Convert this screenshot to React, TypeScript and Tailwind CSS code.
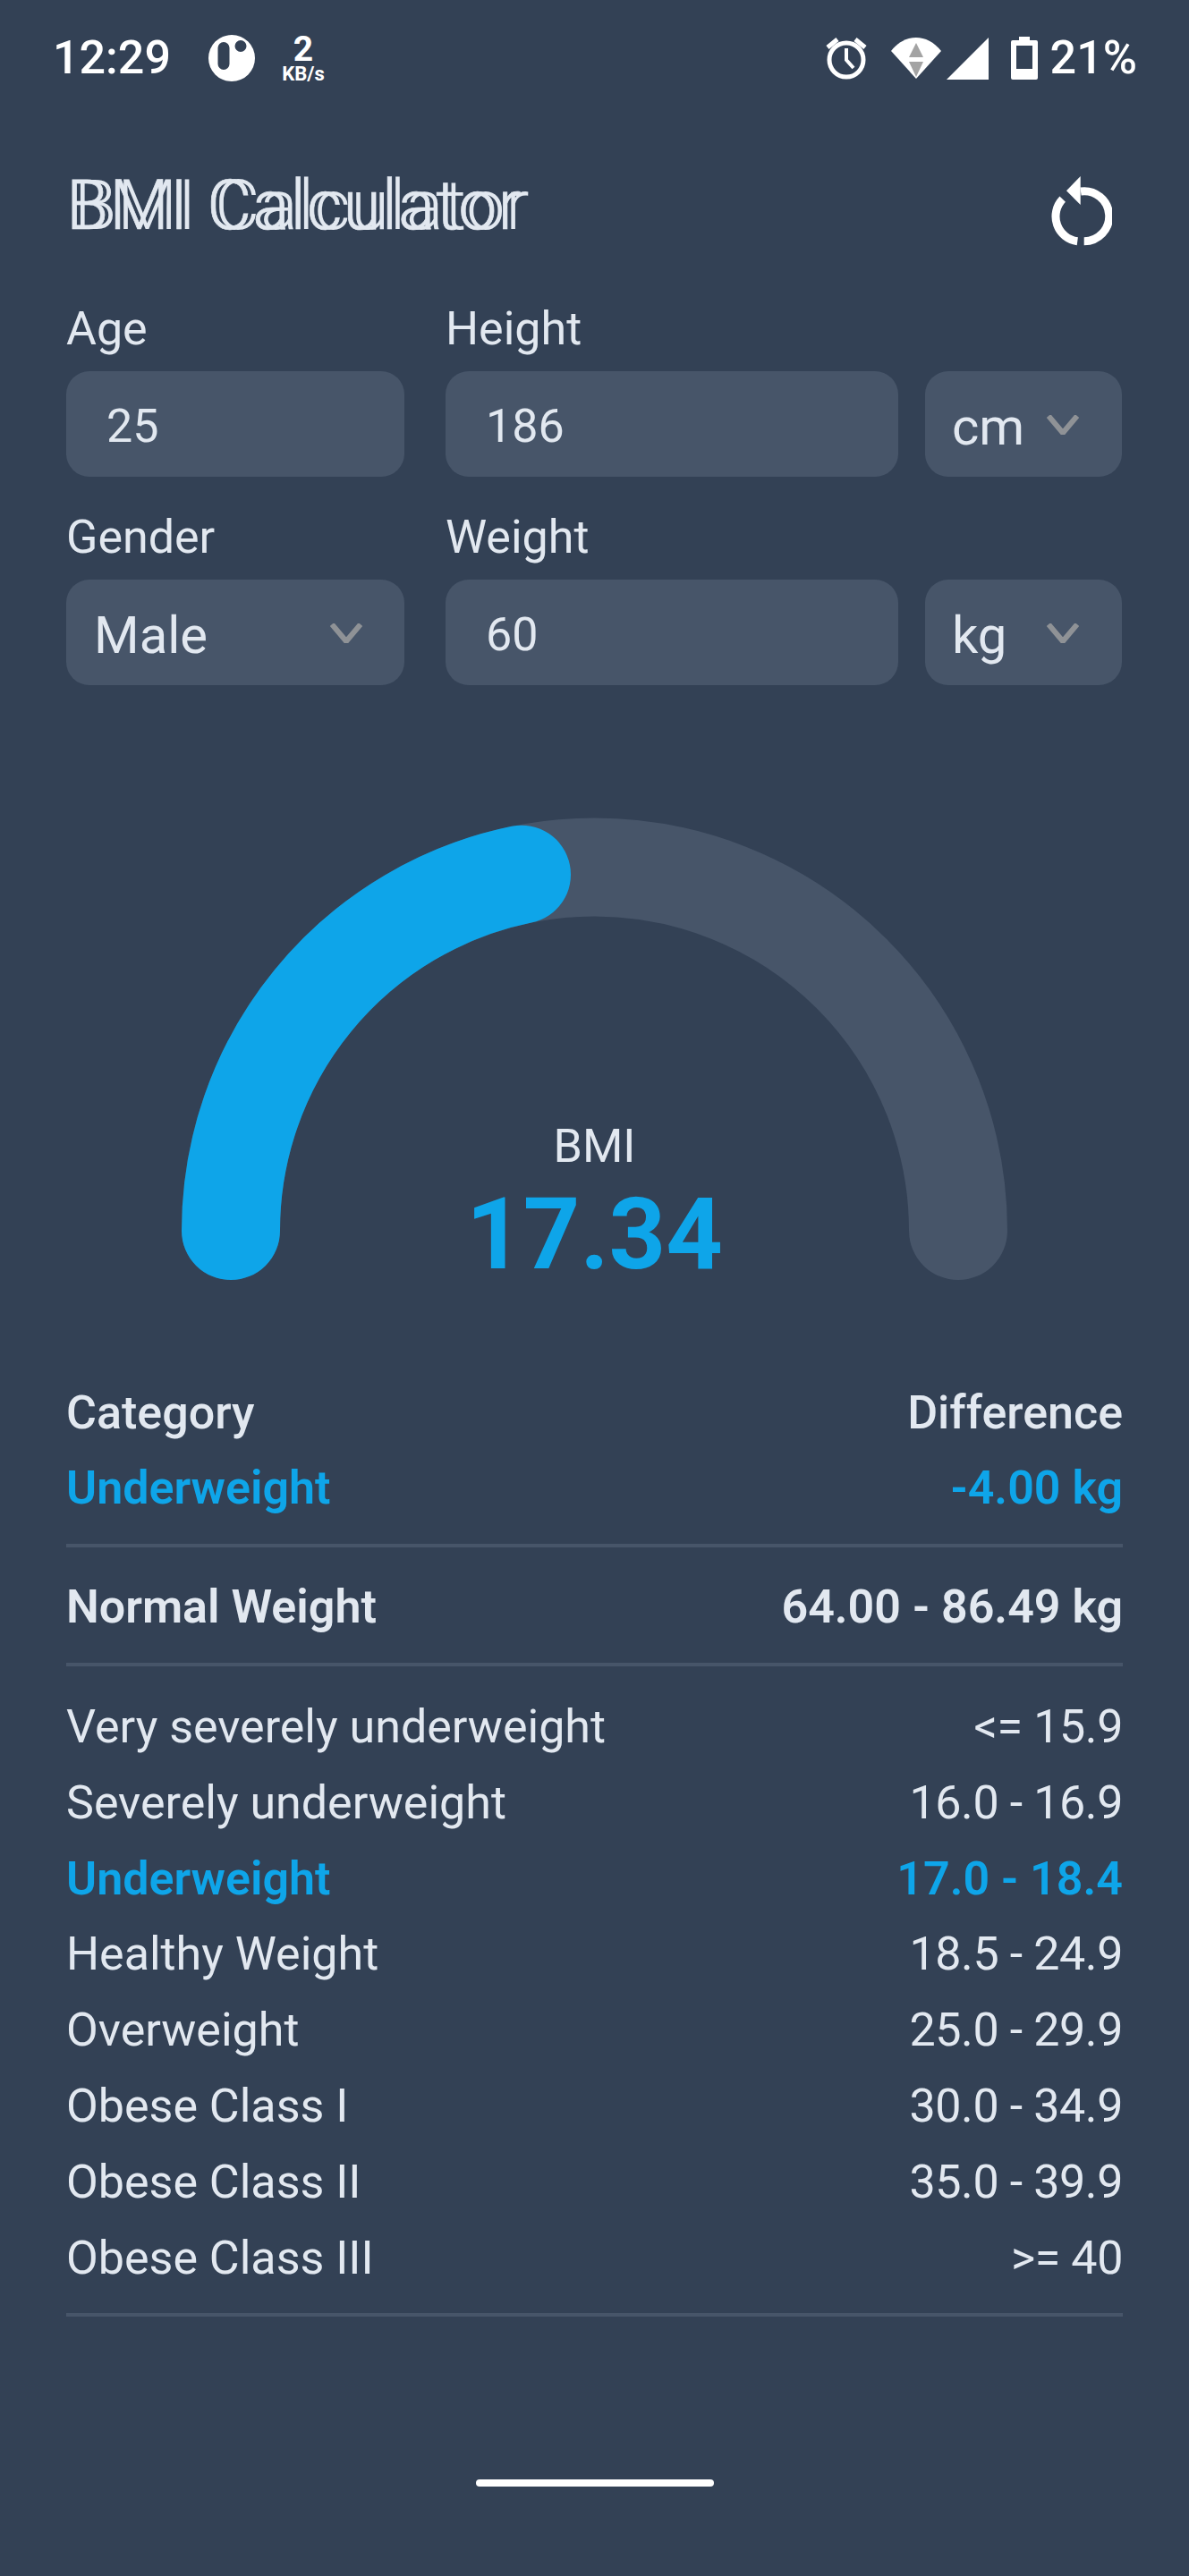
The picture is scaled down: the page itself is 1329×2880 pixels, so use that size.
const ranges = [
  { name: "Very severely underweight", value: "<= 15.9" },
  { name: "Severely underweight", value: "16.0 - 16.9" },
  { name: "Underweight", value: "17.0 - 18.4", active: true },
  { name: "Healthy Weight", value: "18.5 - 24.9" },
  { name: "Overweight", value: "25.0 - 29.9" },
  { name: "Obese Class I", value: "30.0 - 34.9" },
  { name: "Obese Class II", value: "35.0 - 39.9" },
  { name: "Obese Class III", value: ">= 40" },
];

function Chevron() {
  return (
    <svg width="36" height="22" viewBox="0 0 36 22" className="shrink-0">
      <path d="M2 1 L18 20 L34 1" fill="none" stroke="#8f9296" strokeWidth="6" />
    </svg>
  );
}

function Field({ label, value, width }: { label: string; value: string; width: string }) {
  return (
    <div className={width}>
      <div className="h-[72px] mb-[11px] leading-[72px]">{label}</div>
      <div className="h-[118px] rounded-[26px] bg-[#475569] pl-[45px] leading-[124px]">{value}</div>
    </div>
  );
}

function Select({
  label,
  value,
  width,
  padding,
  chevronX,
}: {
  label?: string;
  value: string;
  width: string;
  padding: string;
  chevronX: string;
}) {
  return (
    <div className={width}>
      <div className="h-[72px] mb-[11px] leading-[72px]">{label}</div>
      <div className={`relative h-[118px] rounded-[26px] bg-[#475569] flex items-start text-[58px] ${padding}`}>
        <span className="leading-[124px]">{value}</span>
        <span className={`absolute top-[49px] ${chevronX}`}>
          <Chevron />
        </span>
      </div>
    </div>
  );
}

function Rule({ className }: { className: string }) {
  return <div className={`h-1 bg-[#475569] ${className}`} />;
}

function StatusBar() {
  return (
    <div className="h-[130px] pl-[59px] pr-[58px] flex items-center text-white">
      <span className="text-[52px] font-medium">12:29</span>
      <svg width="52" height="52" viewBox="0 0 52 52" className="ml-[42px]">
        <path
          fillRule="evenodd"
          fill="#fff"
          d="M26 0a26 26 0 1 0 0 52a26 26 0 1 0 0-52z M17 8a6.500 6.500 0 0 0-6.500 6.500v18a6.500 6.500 0 0 0 13 0v-18a6.500 6.500 0 0 0-6.500-6.500z M36 6a6.500 6.500 0 1 0 0 13a6.500 6.500 0 1 0 0-13z"
        />
      </svg>
      <div className="ml-[26px] w-[56px] flex flex-col items-center">
        <span className="text-[39px] leading-[36px] font-bold">2</span>
        <span className="text-[22px] leading-[20px] font-bold">KB/s</span>
      </div>
      <div className="ml-auto flex items-center">
        <svg width="46" height="48" viewBox="0 0 46 48">
          <circle cx="23" cy="26" r="19" fill="none" stroke="#fff" strokeWidth="5" />
          <path d="M23 13 V26 L31 35" fill="none" stroke="#fff" strokeWidth="4" />
          <path d="M2 12 L13 3 M44 12 L33 3" fill="none" stroke="#fff" strokeWidth="5" />
        </svg>
        <svg width="56" height="46" viewBox="0 0 56 46" className="ml-[27px]">
          <path d="M0 15 C16 -5 40 -5 56 15 L28 46 Z" fill="#fff" />
          <path d="M28 6 L36 22 H20 Z M20 27 H36 L28 44 Z" fill="#a3a3a3" />
        </svg>
        <svg width="47" height="47" viewBox="0 0 47 47" className="ml-[6px]">
          <path d="M0 47 L47 0 V47 Z" fill="#fff" />
        </svg>
        <svg width="30" height="48" viewBox="0 0 30 48" className="ml-[25px]">
          <path
            fillRule="evenodd"
            fill="#fff"
            d="M9 0 H21 V4 H28 Q30 4 30 6 V46 Q30 48 28 48 H2 Q0 48 0 46 V6 Q0 4 2 4 H9 Z M6 10 V36 H24 V10 Z"
          />
        </svg>
        <span className="ml-[14px] text-[52px] font-medium">21%</span>
      </div>
    </div>
  );
}

export default function App() {
  return (
    <div className="min-h-screen bg-[#334155] text-[#e2e8f0] text-[52px] [font-family:Roboto,sans-serif]">
      <StatusBar />

      <div className="px-[74px]">
        {/* Title */}
        <div className="h-[110px] mt-[50px] flex items-center justify-between">
          <h1 className="mb-[10px] text-[77px] font-light leading-[110px] tracking-[1px] [-webkit-text-stroke:0.7px_#e2e8f0] [text-shadow:9px_0_0_#e2e8f0]">
            BMI Calculator
          </h1>
          <svg width="70" height="80" viewBox="0 0 70 80" className="mr-[12px] mt-[4px]">
            <path d="M34.700 0 L19 16.300 L34.700 32 Z" fill="#fff" />
            <path d="M35 17 A28 28 0 1 1 38.700 72.750" fill="none" stroke="#fff" strokeWidth="9" />
            <path d="M14.700 25.700 A28 28 0 0 0 31.300 72.750" fill="none" stroke="#fff" strokeWidth="9" />
          </svg>
        </div>

        {/* Form */}
        <div className="mt-[42px] flex gap-x-[46px]">
          <Field label="Age" value="25" width="w-[378px]" />
          <div className="flex gap-x-[30px]">
            <Field label="Height" value="186" width="w-[506px]" />
            <Select value="cm" width="w-[220px]" padding="pl-[30px]" chevronX="left-[136px]" />
          </div>
        </div>
        <div className="mt-[32px] flex gap-x-[46px]">
          <Select label="Gender" value="Male" width="w-[378px]" padding="pl-[31px]" chevronX="left-[295px]" />
          <div className="flex gap-x-[30px]">
            <Field label="Weight" value="60" width="w-[506px]" />
            <Select value="kg" width="w-[220px]" padding="pl-[30px]" chevronX="left-[136px]" />
          </div>
        </div>

        {/* Gauge */}
        <div className="relative w-[923px] h-[517px] mt-[148px] ml-[129px]">
          <svg width="923" height="517" viewBox="0 0 923 517">
            <path
              d="M55 462 A406.500 406.500 0 0 1 868 462"
              fill="none"
              stroke="#475569"
              strokeWidth="110"
              strokeLinecap="round"
            />
            <path
              d="M55 462 A406.500 406.500 0 0 1 380 63.700"
              fill="none"
              stroke="#0ea5e9"
              strokeWidth="110"
              strokeLinecap="round"
            />
          </svg>
          <div className="absolute left-0 right-0 top-[338px] flex flex-col items-center">
            <span className="leading-[60px]">BMI</span>
            <span className="text-[111px] leading-[120px] font-bold text-[#0ea5e9] mt-[8px]">17.34</span>
          </div>
        </div>

        {/* Result */}
        <div className="mt-[107px] flex justify-between leading-[84px] font-medium">
          <span>Category</span>
          <span>Difference</span>
        </div>
        <div className="flex justify-between leading-[84px] font-semibold text-[#0ea5e9]">
          <span>Underweight</span>
          <span>-4.00 kg</span>
        </div>
        <Rule className="mt-[20px]" />
        <div className="mt-[25px] flex justify-between leading-[84px] font-semibold">
          <span>Normal Weight</span>
          <span>64.00 - 86.49 kg</span>
        </div>
        <Rule className="mt-[20px]" />

        {/* Ranges */}
        <div className="mt-[26px]">
          {ranges.map((r) => (
            <div
              key={r.name}
              className={
                r.active
                  ? "flex justify-between leading-[84.800px] font-semibold text-[#0ea5e9]"
                  : "flex justify-between leading-[84.800px]"
              }
            >
              <span>{r.name}</span>
              <span className={r.active ? "" : "tracking-[-0.4px]"}>{r.value}</span>
            </div>
          ))}
        </div>
        <Rule className="mt-[19px]" />
      </div>

      {/* Home indicator */}
      <div className="w-[266px] h-2 mt-[182px] mx-auto rounded-full bg-white" />
    </div>
  );
}
